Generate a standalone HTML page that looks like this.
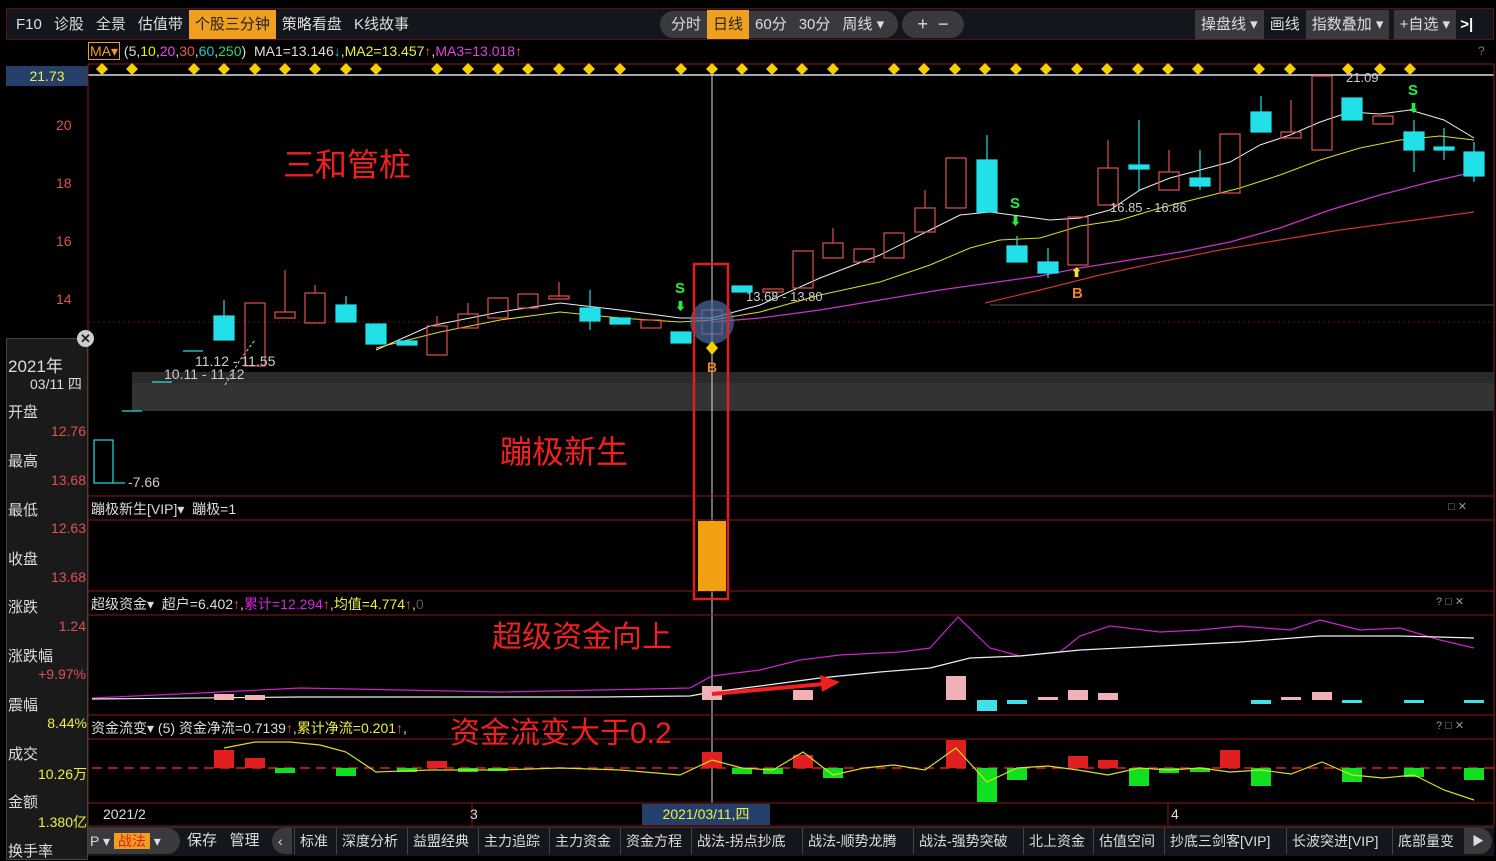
<!DOCTYPE html>
<html><head><meta charset="utf-8"><style>
*{margin:0;padding:0;box-sizing:border-box}
body{width:1496px;height:860px;background:#000;overflow:hidden;position:relative;font-family:"Liberation Sans","Noto Sans CJK SC",sans-serif;color:#ccc}
.a{position:absolute;white-space:nowrap}
.nav{top:10px;height:29px;font-size:15px;line-height:29px;color:#ddd}
.tab{display:inline-block;padding:0 6px}
.btab{position:absolute;top:828px;height:26px;line-height:26px;font-size:14px;color:#ddd;border-left:1px solid #444;padding:0 5px}
.lbl{font-size:15px;color:#ddd;left:8px}
.val{font-size:14px;color:#e05050;right:1410px;text-align:right}
</style></head><body>
<!-- top bar -->
<div class="a" style="left:6px;top:8px;width:1488px;height:32px;background:#14161e;border:1px solid #5a1010"></div>
<div class="a nav" style="left:10px"><span class="tab">F10</span><span class="tab">诊股</span><span class="tab">全景</span><span class="tab">估值带</span><span class="tab" style="background:#f0a020;color:#222">个股三分钟</span><span class="tab">策略看盘</span><span class="tab">K线故事</span></div>
<div class="a" style="left:660px;top:11px;width:238px;height:27px;background:#3a3a3e;border-radius:14px"></div>
<div class="a nav" style="left:665px"><span class="tab">分时</span><span class="tab" style="background:#f0a020;color:#222">日线</span><span class="tab">60分</span><span class="tab">30分</span><span class="tab">周线 ▾</span></div>
<div class="a" style="left:902px;top:11px;width:62px;height:27px;background:#3a3a3e;border-radius:14px;color:#ddd;font-size:18px;line-height:27px;text-align:center">+ &nbsp;−</div>
<div class="a nav" style="left:1195px"><span class="tab" style="background:#3a3a3e">操盘线 ▾</span><span class="tab">画线</span><span class="tab" style="background:#3a3a3e">指数叠加 ▾</span> <span class="tab" style="background:#3a3a3e">+自选 ▾</span> <b style="color:#fff">&gt;|</b></div>
<!-- MA line -->
<div class="a" style="left:88px;top:43px;font-size:14px;color:#ddd"><span style="color:#f0a020;border:1px solid #f0a020;padding:0 1px">MA▾</span> (5,<span style="color:#ee0">10</span>,<span style="color:#e4e">20</span>,<span style="color:#e55">30</span>,<span style="color:#2cc">60</span>,<span style="color:#2d6">250</span>) &nbsp;MA1=13.146<span style="color:#2cc">↓</span>,<span style="color:#ee4">MA2=13.457</span><span style="color:#e55">↑</span>,<span style="color:#d4d">MA3=13.018</span><span style="color:#e55">↑</span></div>
<div class="a" style="left:1478px;top:44px;font-size:12px;color:#777">?</div>
<div class="a" style="left:6px;top:66px;width:82px;height:20px;background:#24406a;color:#ee4;font-size:14px;line-height:20px;text-align:center">21.73</div>
<svg class="a" style="left:0;top:0" width="1496" height="860">
<line x1="88" y1="64" x2="1494" y2="64" stroke="#8a1a1a"/>
<line x1="88" y1="75" x2="1494" y2="75" stroke="#ddd" stroke-width="1.5"/>
<line x1="88" y1="64" x2="88" y2="826" stroke="#8a1a1a"/>
<line x1="1494" y1="64" x2="1494" y2="826" stroke="#8a1a1a"/>
<g fill="#f5d000">
<path id="d" d="M0 -6 L6 0 L0 6 L-6 0Z" transform="translate(102,69)"/>
<use href="#d" x="30"/><use href="#d" x="92"/><use href="#d" x="122"/><use href="#d" x="153"/><use href="#d" x="183"/><use href="#d" x="213"/><use href="#d" x="244"/><use href="#d" x="274"/><use href="#d" x="335"/><use href="#d" x="366"/><use href="#d" x="396"/><use href="#d" x="426"/><use href="#d" x="457"/><use href="#d" x="487"/><use href="#d" x="518"/><use href="#d" x="579"/><use href="#d" x="610"/><use href="#d" x="640"/><use href="#d" x="670"/><use href="#d" x="700"/><use href="#d" x="731"/><use href="#d" x="792"/><use href="#d" x="822"/><use href="#d" x="853"/><use href="#d" x="883"/><use href="#d" x="914"/><use href="#d" x="944"/><use href="#d" x="975"/><use href="#d" x="1005"/><use href="#d" x="1036"/><use href="#d" x="1066"/><use href="#d" x="1096"/><use href="#d" x="1157"/><use href="#d" x="1188"/><use href="#d" x="1246"/><use href="#d" x="1278"/><use href="#d" x="1308"/>
</g>
<g stroke="#6a1010" stroke-dasharray="2 3"><line x1="88" y1="322" x2="1494" y2="322"/></g>
<rect x="132" y="372" width="1362" height="39" fill="#333"/>
<rect x="132" y="372" width="1362" height="11" fill="#2a2a2a"/>
<line x1="990" y1="305" x2="1494" y2="305" stroke="#555"/>
<!-- MA lines -->
<polyline fill="none" stroke="#eee" stroke-width="1" points="376,350 430,326 500,312 560,303 620,310 680,318 712,318 760,305 820,278 880,255 930,230 960,215 990,212 1020,216 1050,220 1080,218 1110,210 1140,190 1170,178 1200,170 1230,162 1260,145 1290,135 1320,122 1350,112 1380,114 1410,110 1444,120 1474,138"/>
<polyline fill="none" stroke="#dd2" stroke-width="1" points="376,348 440,332 500,320 560,312 620,318 680,322 712,320 760,312 820,295 880,282 930,265 970,248 1000,240 1040,238 1080,226 1120,220 1160,208 1200,198 1240,188 1280,175 1320,160 1360,148 1400,140 1440,136 1474,140"/>
<polyline fill="none" stroke="#c3c" stroke-width="1.2" points="712,322 760,318 820,310 880,300 940,290 990,283 1040,276 1080,268 1130,260 1180,252 1230,242 1280,228 1330,210 1380,195 1430,182 1474,172"/>
<polyline fill="none" stroke="#c33" stroke-width="1.2" points="985,303 1040,290 1100,275 1160,262 1220,250 1280,240 1340,230 1400,222 1474,212"/>
<polyline fill="none" stroke="#ccc" stroke-dasharray="3 2" points="225,385 240,360 255,340"/>
<!-- candles: cyan filled / red hollow -->
<g stroke="#21e0e8" fill="#21e0e8" stroke-width="1.2">
<rect x="94" y="440" width="19" height="43" fill="none"/><line x1="113" y1="483" x2="125" y2="483"/>
<line x1="122" y1="411" x2="142" y2="411"/><line x1="152" y1="382" x2="172" y2="382"/><line x1="183" y1="351" x2="203" y2="351"/>
<rect x="214" y="316" width="20" height="24"/><line x1="224" y1="300" x2="224" y2="316"/>
<rect x="336" y="305" width="20" height="17"/><line x1="346" y1="296" x2="346" y2="305"/>
<rect x="366" y="324" width="20" height="20"/>
<rect x="397" y="341" width="20" height="4"/>
<rect x="580" y="308" width="20" height="13"/><line x1="590" y1="290" x2="590" y2="330"/>
<rect x="610" y="318" width="20" height="6"/>
<rect x="671" y="332" width="20" height="11"/>
<rect x="732" y="286" width="20" height="6"/>
<rect x="977" y="160" width="20" height="52"/><line x1="987" y1="135" x2="987" y2="160"/>
<rect x="1007" y="246" width="20" height="16"/><line x1="1017" y1="236" x2="1017" y2="246"/>
<rect x="1038" y="262" width="20" height="11"/><line x1="1048" y1="248" x2="1048" y2="278"/>
<rect x="1129" y="165" width="20" height="4"/><line x1="1139" y1="120" x2="1139" y2="190"/>
<rect x="1190" y="178" width="20" height="8"/><line x1="1200" y1="150" x2="1200" y2="190"/>
<rect x="1251" y="112" width="20" height="20"/><line x1="1261" y1="96" x2="1261" y2="112"/>
<rect x="1342" y="98" width="20" height="22"/>
<rect x="1404" y="132" width="20" height="18"/><line x1="1414" y1="120" x2="1414" y2="172"/>
<rect x="1434" y="147" width="20" height="3"/><line x1="1444" y1="128" x2="1444" y2="160"/>
<rect x="1464" y="152" width="20" height="24"/><line x1="1474" y1="142" x2="1474" y2="182"/>
</g>
<g stroke="#e05050" fill="none" stroke-width="1.2">
<rect x="245" y="303" width="20" height="63"/>
<rect x="275" y="312" width="20" height="6"/><line x1="285" y1="270" x2="285" y2="312"/>
<rect x="305" y="293" width="20" height="30"/><line x1="315" y1="285" x2="315" y2="293"/>
<rect x="427" y="326" width="20" height="29"/><line x1="437" y1="316" x2="437" y2="326"/>
<rect x="458" y="314" width="20" height="14"/><line x1="468" y1="303" x2="468" y2="314"/>
<rect x="488" y="298" width="20" height="20"/>
<rect x="518" y="294" width="20" height="14"/>
<rect x="549" y="296" width="20" height="3"/><line x1="559" y1="282" x2="559" y2="296"/>
<rect x="641" y="320" width="20" height="8"/>
<rect x="702" y="310" width="20" height="24"/>
<rect x="763" y="289" width="20" height="3"/>
<rect x="793" y="251" width="20" height="37"/>
<rect x="823" y="243" width="20" height="15"/><line x1="833" y1="228" x2="833" y2="243"/>
<rect x="854" y="249" width="20" height="13"/>
<rect x="884" y="233" width="20" height="25"/>
<rect x="915" y="208" width="20" height="24"/><line x1="925" y1="190" x2="925" y2="208"/>
<rect x="946" y="158" width="20" height="50"/>
<rect x="1068" y="217" width="20" height="48"/>
<rect x="1098" y="168" width="20" height="37"/><line x1="1108" y1="140" x2="1108" y2="168"/>
<rect x="1159" y="172" width="20" height="18"/><line x1="1169" y1="150" x2="1169" y2="172"/>
<rect x="1220" y="134" width="20" height="59"/>
<rect x="1281" y="132" width="20" height="6"/><line x1="1291" y1="100" x2="1291" y2="132"/>
<rect x="1312" y="76" width="20" height="74"/>
<rect x="1373" y="116" width="20" height="8"/>
</g>
<!-- crosshair -->
<line x1="712" y1="75" x2="712" y2="803" stroke="#ddd"/>
<circle cx="712" cy="322" r="22" fill="#4a6aa0" opacity="0.7"/>
<rect x="694" y="264" width="34" height="335" fill="none" stroke="#e02020" stroke-width="2.5"/>
<path d="M712 341 L718 348 L712 355 L706 348Z" fill="#f5d000"/>
<!-- panel separators -->
<g stroke="#8a1a1a"><line x1="88" y1="496" x2="1494" y2="496"/><line x1="88" y1="520" x2="1494" y2="520"/><line x1="88" y1="591" x2="1494" y2="591"/><line x1="88" y1="615" x2="1494" y2="615"/><line x1="88" y1="715" x2="1494" y2="715"/><line x1="88" y1="739" x2="1494" y2="739"/><line x1="88" y1="803" x2="1494" y2="803"/><line x1="88" y1="826" x2="1494" y2="826"/><line x1="472" y1="803" x2="472" y2="826"/><line x1="1168" y1="803" x2="1168" y2="826"/></g>
<rect x="698" y="521" width="28" height="70" fill="#f0a010"/>
<!-- super fund -->
<polyline fill="none" stroke="#d020d0" stroke-width="1.2" points="92,698 200,693 300,688 400,690 500,692 600,690 690,688 712,676 760,670 800,660 840,655 900,652 930,648 958,617 990,648 1020,656 1060,652 1080,636 1110,626 1160,632 1200,630 1240,626 1290,630 1320,620 1360,630 1400,628 1440,640 1474,648"/>
<polyline fill="none" stroke="#eee" stroke-width="1.2" points="92,699 300,697 600,697 690,696 712,692 760,686 820,678 880,672 930,668 970,658 1020,656 1080,650 1160,646 1240,642 1320,636 1400,636 1474,638"/>
<g fill="#f0b0b8"><rect x="214" y="694" width="20" height="6"/><rect x="245" y="695" width="20" height="5"/><rect x="702" y="686" width="20" height="14"/><rect x="793" y="690" width="20" height="10"/><rect x="946" y="676" width="20" height="24"/><rect x="1068" y="690" width="20" height="10"/><rect x="1098" y="693" width="20" height="7"/><rect x="1312" y="692" width="20" height="8"/><rect x="1038" y="697" width="20" height="3"/><rect x="1281" y="697" width="20" height="3"/></g>
<g fill="#40e0e8"><rect x="977" y="700" width="20" height="11"/><rect x="1007" y="700" width="20" height="4"/><rect x="1251" y="700" width="20" height="4"/><rect x="1342" y="700" width="20" height="3"/><rect x="1404" y="700" width="20" height="3"/><rect x="1464" y="700" width="20" height="3"/></g>
<path d="M712 694 L835 683" stroke="#f02020" stroke-width="4"/><path d="M840 682 L820 675 L822 692Z" fill="#f02020"/>
<!-- money flow -->
<line x1="92" y1="768" x2="1494" y2="768" stroke="#e02020" stroke-dasharray="10 6" stroke-width="1.5"/>
<g fill="#e02020"><rect x="214" y="750" width="20" height="18"/><rect x="245" y="758" width="20" height="10"/><rect x="427" y="761" width="20" height="7"/><rect x="702" y="752" width="20" height="16"/><rect x="793" y="755" width="20" height="13"/><rect x="946" y="740" width="20" height="28"/><rect x="1068" y="756" width="20" height="12"/><rect x="1098" y="760" width="20" height="8"/><rect x="1220" y="750" width="20" height="18"/></g>
<g fill="#10e020"><rect x="275" y="768" width="20" height="5"/><rect x="336" y="768" width="20" height="8"/><rect x="397" y="768" width="20" height="4"/><rect x="458" y="768" width="20" height="4"/><rect x="488" y="768" width="20" height="3"/><rect x="732" y="768" width="20" height="6"/><rect x="763" y="768" width="20" height="6"/><rect x="823" y="768" width="20" height="10"/><rect x="977" y="768" width="20" height="34"/><rect x="1007" y="768" width="20" height="12"/><rect x="1129" y="768" width="20" height="18"/><rect x="1159" y="768" width="20" height="5"/><rect x="1190" y="768" width="20" height="4"/><rect x="1251" y="768" width="20" height="18"/><rect x="1342" y="768" width="20" height="14"/><rect x="1404" y="768" width="20" height="9"/><rect x="1464" y="768" width="20" height="12"/></g>
<polyline fill="none" stroke="#dd2" stroke-width="1.2" points="224,748 255,742 290,742 320,745 346,752 376,772 430,770 500,770 560,768 620,770 680,775 712,760 742,768 773,770 803,752 833,775 864,768 894,765 925,770 956,748 987,782 1017,768 1048,766 1078,770 1108,775 1139,768 1169,770 1200,768 1230,772 1261,770 1291,774 1322,762 1352,775 1383,778 1414,775 1444,790 1474,800"/>
<path d="M0 0" />
</svg>
<!-- price labels -->
<div class="a" style="left:56px;top:117px;font-size:14px;color:#e05050">20</div>
<div class="a" style="left:56px;top:175px;font-size:14px;color:#e05050">18</div>
<div class="a" style="left:56px;top:233px;font-size:14px;color:#e05050">16</div>
<div class="a" style="left:56px;top:291px;font-size:14px;color:#e05050">14</div>
<div class="a" style="left:283px;top:140px;font-size:32px;color:#f02020">三和管桩</div>
<div class="a" style="left:500px;top:427px;font-size:32px;color:#f02020">蹦极新生</div>
<div class="a" style="left:492px;top:612px;font-size:30px;color:#f02020">超级资金向上</div>
<div class="a" style="left:450px;top:708px;font-size:30px;color:#f02020">资金流变大于0.2</div>
<div class="a" style="left:195px;top:353px;font-size:14px;color:#ccc">11.12 - 11.55</div>
<div class="a" style="left:164px;top:366px;font-size:14px;color:#ccc">10.11 - 11.12</div>
<div class="a" style="left:128px;top:474px;font-size:14px;color:#ccc">-7.66</div>
<div class="a" style="left:746px;top:289px;font-size:13px;color:#ccc">13.68 - 13.80</div>
<div class="a" style="left:1110px;top:200px;font-size:13px;color:#ccc">16.85 - 16.86</div>
<div class="a" style="left:1346px;top:70px;font-size:13px;color:#ccc">21.09</div>
<div class="a" style="left:675px;top:280px;font-size:15px;color:#2e4;font-weight:bold">S<br><span style="font-size:11px">⬇</span></div>
<div class="a" style="left:1010px;top:195px;font-size:15px;color:#2e4;font-weight:bold">S<br><span style="font-size:11px">⬇</span></div>
<div class="a" style="left:1408px;top:82px;font-size:15px;color:#2e4;font-weight:bold">S<br><span style="font-size:11px">⬇</span></div>
<div class="a" style="left:1071px;top:264px;font-size:11px;color:#fd2">⬆</div>
<div class="a" style="left:1072px;top:285px;font-size:15px;color:#f08020;font-weight:bold">B</div>
<div class="a" style="left:707px;top:359px;font-size:14px;color:#f08020;font-weight:bold">B</div>
<!-- panel headers -->
<div class="a" style="left:91px;top:499px;font-size:14px;color:#ddd">蹦极新生[VIP]▾ &nbsp;蹦极=1</div>
<div class="a" style="left:91px;top:594px;font-size:14px;color:#ddd">超级资金▾ &nbsp;超户=6.402<span style="color:#e55">↑</span>,<span style="color:#d2d">累计=12.294</span><span style="color:#e55">↑</span>,<span style="color:#ee4">均值=4.774</span><span style="color:#e55">↑</span>,<span style="color:#555">0</span></div>
<div class="a" style="left:91px;top:718px;font-size:14px;color:#ddd">资金流变▾ (5) 资金净流=0.7139<span style="color:#e55">↑</span>,<span style="color:#ee4">累计净流=0.201</span><span style="color:#e55">↑</span>,</div>
<div class="a" style="left:1448px;top:500px;font-size:11px;color:#999">□ ✕</div>
<div class="a" style="left:1436px;top:595px;font-size:11px;color:#999">? □ ✕</div>
<div class="a" style="left:1436px;top:719px;font-size:11px;color:#999">? □ ✕</div>
<!-- date axis -->
<div class="a" style="left:103px;top:806px;font-size:14px;color:#ddd">2021/2</div>
<div class="a" style="left:470px;top:806px;font-size:14px;color:#ddd">3</div>
<div class="a" style="left:1171px;top:806px;font-size:14px;color:#ddd">4</div>
<div class="a" style="left:642px;top:804px;width:128px;height:21px;background:#24406a;color:#ee4;font-size:14px;line-height:21px;text-align:center">2021/03/11,四</div>
<!-- left info panel -->
<div class="a" style="left:6px;top:338px;width:82px;height:522px;background:#1a1a1a;border:1px solid #444"></div>
<div class="a" style="left:77px;top:330px;width:17px;height:17px;border-radius:50%;background:#ccc;color:#222;font-size:13px;line-height:17px;text-align:center;font-weight:bold">✕</div>
<div class="a lbl" style="top:352px;font-size:17px">2021年</div>
<div class="a" style="left:30px;top:374px;font-size:14px;color:#ddd">03/11 四</div>
<div class="a lbl" style="top:401px">开盘</div><div class="a val" style="top:423px">12.76</div>
<div class="a lbl" style="top:450px">最高</div><div class="a val" style="top:472px">13.68</div>
<div class="a lbl" style="top:499px">最低</div><div class="a val" style="top:520px">12.63</div>
<div class="a lbl" style="top:548px">收盘</div><div class="a val" style="top:569px">13.68</div>
<div class="a lbl" style="top:596px">涨跌</div><div class="a val" style="top:618px">1.24</div>
<div class="a lbl" style="top:645px">涨跌幅</div><div class="a val" style="top:666px">+9.97%</div>
<div class="a lbl" style="top:694px">震幅</div><div class="a" style="right:1409px;top:715px;font-size:14px;color:#ee4">8.44%</div>
<div class="a lbl" style="top:743px">成交</div><div class="a" style="right:1409px;top:764px;font-size:14px;color:#ee4">10.26万</div>
<div class="a lbl" style="top:791px">金额</div><div class="a" style="right:1409px;top:812px;font-size:14px;color:#ee4">1.380亿</div>
<div class="a lbl" style="top:840px">换手率</div>
<!-- bottom tabs -->
<div class="a" style="left:88px;top:827px;width:1406px;height:29px;background:#14161e;border-top:1px solid #333"></div>
<div class="a" style="left:88px;top:828px;width:92px;height:26px;background:#3a3a3e;border-radius:0 13px 13px 0"></div>
<div class="a" style="left:90px;top:828px;font-size:14px;line-height:26px;color:#ddd">P ▾ <span style="background:#f0a020;color:#e02020;padding:0 4px">战法</span> ▾</div>
<div class="a" style="left:187px;top:828px;font-size:15px;line-height:26px;color:#ddd">保存 &nbsp; 管理</div>
<div class="btab" style="left:272px;border:none;background:#3a3a3e;border-radius:13px 0 0 13px;width:20px;padding:0 6px">‹</div>
<div class="btab" style="left:294px">标准</div><div class="btab" style="left:336px">深度分析</div><div class="btab" style="left:407px">益盟经典</div><div class="btab" style="left:478px">主力追踪</div><div class="btab" style="left:549px">主力资金</div><div class="btab" style="left:620px">资金方程</div><div class="btab" style="left:691px">战法-拐点抄底</div><div class="btab" style="left:802px">战法-顺势龙腾</div><div class="btab" style="left:913px">战法-强势突破</div><div class="btab" style="left:1023px">北上资金</div><div class="btab" style="left:1093px">估值空间</div><div class="btab" style="left:1164px">抄底三剑客[VIP]</div><div class="btab" style="left:1286px">长波突进[VIP]</div><div class="btab" style="left:1392px">底部量变</div>
<div class="a" style="left:1464px;top:828px;width:28px;height:26px;background:#3a3a3e;border-radius:0 13px 13px 0;color:#ddd;line-height:26px;text-align:center;font-size:12px">▶</div>
</body></html>
